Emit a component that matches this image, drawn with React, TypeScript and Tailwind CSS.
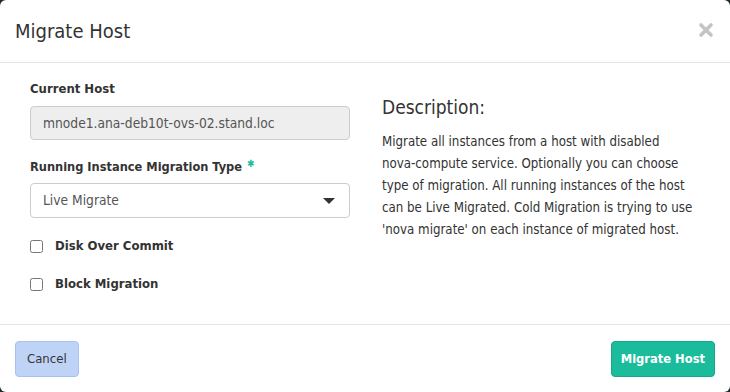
import { useState } from 'react';

const font = { fontFamily: '"Liberation Sans Narrow", "DejaVu Sans Condensed", Roboto, sans-serif' };

const descLines = [
    'Migrate all instances from a host with disabled',
    'nova-compute service. Optionally you can choose',
    'type of migration. All running instances of the host',
    'can be Live Migrated. Cold Migration is trying to use',
    "'nova migrate' on each instance of migrated host.",
];

export default function App() {
    const [diskOver, setDiskOver] = useState(false);
    const [blockMig, setBlockMig] = useState(false);

    return (
        <div className="w-[730px] h-[392px] bg-[#1f2a2a]" style={font}>
            <div className="w-full h-full bg-white rounded-[6px] flex flex-col text-[#333]">
                {/* Header */}
                <div className="h-[63px] flex items-center justify-between pl-[15px] pr-[15px] border-b border-[#e5e5e5]">
                    <h4 className="text-[20px] text-[#333] leading-none">Migrate Host</h4>
                    <svg width="16" height="16" viewBox="0 0 16 16" className="mr-[1px] -mt-[2px]">
                        <path d="M3 3 L13 13 M13 3 L3 13" stroke="#c4c4c4" strokeWidth="3.6" strokeLinecap="round" />
                    </svg>
                </div>

                {/* Body */}
                <div className="flex-1 flex px-[30px] pt-[16px] border-b border-[#e5e5e5]">
                    <div className="w-[320px] shrink-0 flex flex-col">
                        <label className="text-[13px] font-bold leading-[20px] mb-[7px]">Current Host</label>
                        <div className="h-[34px] bg-[#eeeeee] border border-[#cccccc] rounded-[4px] flex items-center px-[12px] text-[13.7px] text-[#555]">
                            mnode1.ana-deb10t-ovs-02.stand.loc
                        </div>

                        <label className="text-[12.7px] font-bold leading-[20px] mt-[17px] mb-[6px]">
                            Running Instance Migration Type
                            <span className="relative -top-[4px] text-[#1abc9c] text-[10px] leading-none ml-[5px]">&#10033;</span>
                        </label>
                        <div className="h-[35px] bg-white border border-[#cccccc] rounded-[4px] flex items-center justify-between px-[12px] text-[13.7px] text-[#555]">
                            <span>Live Migrate</span>
                            <svg width="12" height="8" viewBox="0 0 12 8" className="mr-[2px]">
                                <path d="M0 1 L12 1 L6 7 Z" fill="#333" />
                            </svg>
                        </div>

                        <label className="flex items-center mt-[18px] text-[13px] font-bold leading-[20px] cursor-pointer">
                            <input
                                type="checkbox"
                                checked={diskOver}
                                onChange={(e) => setDiskOver(e.target.checked)}
                                className="w-[13px] h-[13px] mr-[12px]"
                            />
                            Disk Over Commit
                        </label>
                        <label className="flex items-center mt-[18px] text-[13px] font-bold leading-[20px] cursor-pointer">
                            <input
                                type="checkbox"
                                checked={blockMig}
                                onChange={(e) => setBlockMig(e.target.checked)}
                                className="w-[13px] h-[13px] mr-[12px]"
                            />
                            Block Migration
                        </label>
                    </div>

                    <div className="ml-[32px] flex-1 pt-[16px]">
                        <h3 className="text-[19px] leading-[24px] mb-[12px]">Description:</h3>
                        <p className="text-[13.2px] leading-[22px] text-[#333]">
                            {descLines.map((l) => (
                                <span key={l} className="block whitespace-nowrap">{l}</span>
                            ))}
                        </p>
                    </div>
                </div>

                {/* Footer */}
                <div className="h-[67px] flex items-center justify-between px-[15px]">
                    <button className="h-[36px] px-[11px] bg-[#bfd3f7] border border-[#a8c2ef] rounded-[4px] text-[13px] text-[#333]">
                        Cancel
                    </button>
                    <button className="h-[36px] px-[9px] bg-[#1abc9c] border border-[#17a88b] rounded-[4px] text-[12.8px] font-bold text-white">
                        Migrate Host
                    </button>
                </div>
            </div>
        </div>
    );
}
